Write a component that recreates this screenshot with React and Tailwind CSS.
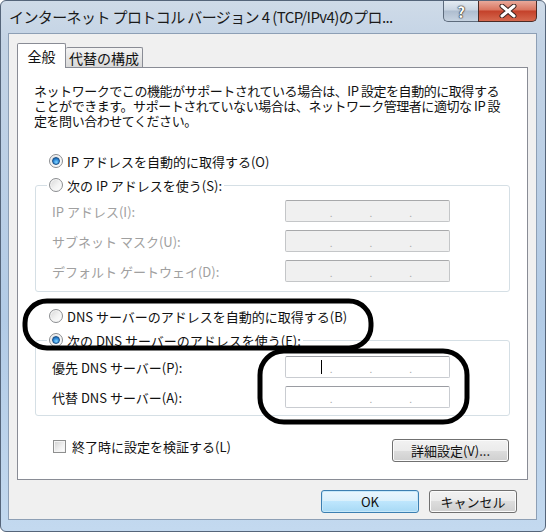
import React from 'react';

const Radio = ({ checked }) => (
    <span className="flex h-[14px] w-[14px] shrink-0 items-center justify-center rounded-full border border-[#8b8d90] bg-[linear-gradient(135deg,#d6d6d6,#f3f3f3_55%,#ffffff)] shadow-[inset_0_0_0_1px_#f7f7f7]">
        {checked && (
            <span className="h-[8px] w-[8px] rounded-full border border-[#1b4f85] bg-[radial-gradient(circle_at_55%_70%,#7fd3ff,#2a86d6_55%,#13508f)]" />
        )}
    </span>
);

const RadioRow = ({ checked, label }) => (
    <div className="flex h-[18px] items-center gap-[4px] whitespace-nowrap">
        <Radio checked={checked} />
        <span>{label}</span>
    </div>
);

const IpField = ({ disabled, cursor }) => (
    <div
        className={`flex h-[22px] w-[165px] items-center rounded-[2px] border ${
            disabled ? 'border-[#c4c6c8] border-t-[#a8a9ab] bg-[#f0f0f0]' : 'border-[#c9ccd1] border-t-[#9a9ca2] bg-white'
        }`}
    >
        <span className="flex w-[44px] justify-end pr-[8px]">
            {cursor && <span className="h-[14px] w-px bg-black" />}
        </span>
        <span className="w-[40px] pt-[3px] text-[10px] leading-none text-[#a9a9a9]">.</span>
        <span className="w-[40px] pt-[3px] text-[10px] leading-none text-[#a9a9a9]">.</span>
        <span className="w-[40px] pt-[3px] text-[10px] leading-none text-[#a9a9a9]">.</span>
    </div>
);

const WinButton = ({ children, focused, className = '' }) => (
    <button
        className={`flex items-center justify-center rounded-[3px] border text-[13px] leading-none ${
            focused
                ? 'border-[#3c7fb1] bg-[linear-gradient(#eaf6fd_0%,#d9f0fc_50%,#bee6fd_50%,#a7d9f5_100%)] shadow-[inset_0_0_0_1px_#c6e8fa]'
                : 'border-[#707070] bg-[linear-gradient(#f2f2f2_0%,#ebebeb_50%,#dddddd_50%,#cfcfcf_100%)] shadow-[inset_0_0_0_1px_#fbfbfb]'
        } ${className}`}
    >
        {children}
    </button>
);

export default function App() {
    return (
        <div className="font-['Noto_Sans_CJK_JP','Noto_Sans',sans-serif] text-[13px] leading-[15px] text-[#111]">
            <div className="relative flex h-[532px] w-[546px] flex-col overflow-hidden rounded-[6px] border border-[#55657a] bg-[linear-gradient(180deg,#cfdbe8_0%,#c3d3e5_8%,#b2cbe6_60%,#c3d9ef_100%)]">
                {/* title bar */}
                <div className="flex h-[32px] shrink-0 items-start pl-[8px] pr-[8px]">
                    <div className="flex-1 whitespace-nowrap pt-[6px] text-[15px] leading-[20px] tracking-[-0.6px] text-[#1a1a1a]">
                        インターネット プロトコル バージョン 4 (TCP/IPv4)のプロ...
                    </div>
                    <div className="flex">
                        <div className="flex h-[21px] w-[35px] items-center justify-center rounded-bl-[5px] border border-t-0 border-r-0 border-[#5d6b7c] bg-[linear-gradient(#e4ebf2_0%,#c9d5e2_45%,#aebdcf_50%,#c6d3e1_100%)] text-[15px] font-bold leading-none text-white [text-shadow:0_0_1px_#222,0_0_1px_#222,0_0_2px_#333]">
                            ?
                        </div>
                        <div className="flex h-[21px] w-[59px] items-center justify-center rounded-br-[5px] border border-t-0 border-[#4a2a25] bg-[linear-gradient(#e9a99a_0%,#d9745f_45%,#c4412a_50%,#d5684e_100%)]">
                            <svg width="18" height="14" viewBox="0 0 18 14">
                                <path d="M3 2 L15 12 M15 2 L3 12" stroke="#3b2420" strokeWidth="5" strokeLinecap="round" />
                                <path d="M3 2 L15 12 M15 2 L3 12" stroke="#ffffff" strokeWidth="3" strokeLinecap="round" />
                            </svg>
                        </div>
                    </div>
                </div>

                {/* client area */}
                <div className="ml-[7px] mr-[8px] flex h-[487px] flex-col border border-[#8d9fb5] bg-[#f0f0f0] pl-[8px] pr-[8px] pt-[9px]">
                    {/* tabs */}
                    <div className="flex items-end">
                        <div className="relative z-10 -mb-px flex h-[25px] w-[49px] items-center justify-center rounded-t-[2px] border border-b-0 border-[#898c95] bg-white text-[14px]">
                            全般
                        </div>
                        <div className="flex h-[20px] w-[77px] items-center justify-center rounded-t-[2px] border border-b-0 border-l-0 border-[#898c95] bg-[linear-gradient(#f4f4f4,#e6e6e6_50%,#d9d9d9)] pt-[1px] text-[14px]">
                            代替の構成
                        </div>
                    </div>

                    {/* panel */}
                    <div className="flex h-[413px] w-[511px] flex-col border border-[#898c95] bg-white px-[16px] pt-[15px]">
                        <p className="whitespace-nowrap tracking-[-0.45px]">
                            ネットワークでこの機能がサポートされている場合は、IP 設定を自動的に取得する
                            <br />
                            ことができます。サポートされていない場合は、ネットワーク管理者に適切な IP 設
                            <br />
                            定を問い合わせてください。
                        </p>

                        <div className="mt-[24px] pl-[15px]">
                            <RadioRow checked label="IP アドレスを自動的に取得する(O)" />
                        </div>

                        <fieldset className="ml-[1px] mt-[6px] w-[475px] rounded-[3px] border border-[#d5dfe5] pb-[9px] pl-[16px] pt-[6px]">
                            <legend className="-ml-[5px] bg-white px-[2px]">
                                <RadioRow label="次の IP アドレスを使う(S):" />
                            </legend>
                            <div className="grid grid-cols-[233px_165px] items-center gap-y-[8px] text-[#a0a0a0]">
                                <span>IP アドレス(I):</span>
                                <IpField disabled />
                                <span>サブネット マスク(U):</span>
                                <IpField disabled />
                                <span>デフォルト ゲートウェイ(D):</span>
                                <IpField disabled />
                            </div>
                        </fieldset>

                        <div className="mt-[15px] pl-[15px]">
                            <RadioRow label="DNS サーバーのアドレスを自動的に取得する(B)" />
                        </div>

                        <fieldset className="ml-[1px] mt-[6px] w-[475px] rounded-[3px] border border-[#d5dfe5] pb-[7px] pl-[16px] pt-[7px]">
                            <legend className="-ml-[5px] bg-white px-[2px]">
                                <RadioRow checked label="次の DNS サーバーのアドレスを使う(E):" />
                            </legend>
                            <div className="grid grid-cols-[233px_165px] items-center gap-y-[8px]">
                                <span>優先 DNS サーバー(P):</span>
                                <IpField cursor />
                                <span>代替 DNS サーバー(A):</span>
                                <IpField />
                            </div>
                        </fieldset>

                        <div className="mt-[21px] flex items-start justify-between pl-[19px] pr-[2px]">
                            <div className="flex h-[18px] items-center gap-[6px]">
                                <span className="h-[13px] w-[13px] border border-[#8e8f8f] bg-[linear-gradient(135deg,#d0d0d0,#f1f1f1_60%,#ffffff)] shadow-[inset_0_0_0_1px_#f4f4f4]" />
                                <span>終了時に設定を検証する(L)</span>
                            </div>
                            <WinButton className="mt-[2px] h-[23px] w-[117px]">詳細設定(V)...</WinButton>
                        </div>
                    </div>

                    {/* dialog buttons */}
                    <div className="mt-[10px] flex justify-end gap-[10px] pr-[11px]">
                        <WinButton focused className="h-[23px] w-[98px]">OK</WinButton>
                        <WinButton className="h-[23px] w-[88px]">キャンセル</WinButton>
                    </div>
                </div>

                {/* hand-drawn annotations */}
                <svg className="pointer-events-none absolute left-0 top-0" width="546" height="532">
                    <rect x="24" y="300" width="346" height="47" rx="22" fill="none" stroke="#000" strokeWidth="5" />
                    <rect x="259" y="350" width="207" height="71" rx="24" fill="none" stroke="#000" strokeWidth="5" />
                </svg>
            </div>
        </div>
    );
}
